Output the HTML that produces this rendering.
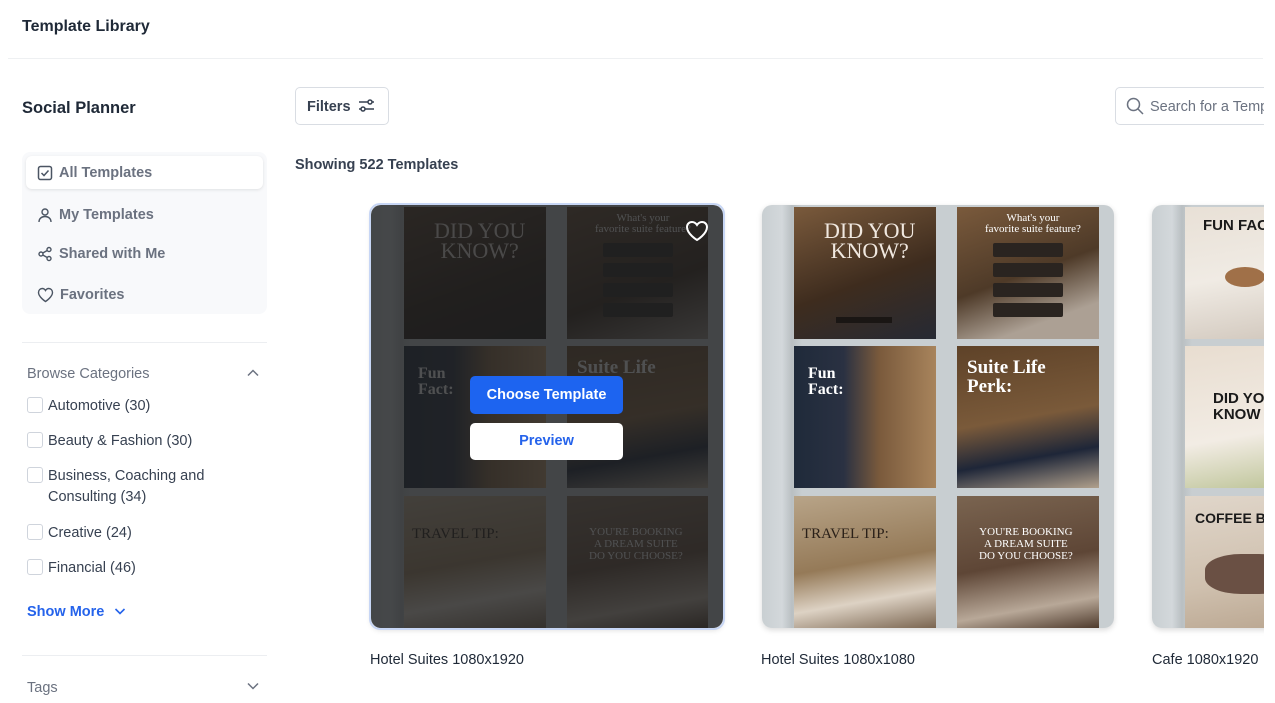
<!DOCTYPE html>
<html><head><meta charset="utf-8"><style>
*{box-sizing:border-box;margin:0;padding:0}
body{width:1275px;height:703px;overflow:hidden;background:#fff;font-family:"Liberation Sans",sans-serif;color:#1f2937;position:relative}
.a{position:absolute}
.t{font-size:16px;font-weight:bold;color:#1f2937}
.nav{position:absolute;left:22px;top:152px;width:245px;height:162px;background:#f8f9fb;border-radius:8px}
.ni{position:absolute;left:15px;font-size:14.5px;font-weight:bold;color:#6b7280;display:flex;align-items:center;gap:6px}
.cb{width:16px;height:16px;border:1.5px solid #cfd4dc;border-radius:3px;position:absolute;left:27px}
.cl{position:absolute;left:48px;font-size:14.5px;color:#374151;line-height:21px}
.card{position:absolute;top:205px;width:352px;height:423px;border-radius:10px;background:linear-gradient(90deg,#c9cfd2 0,#d3d8db 20px,#b9bfc2 30px,#c8ced1 40px);overflow:hidden;box-shadow:0 2px 6px rgba(0,0,0,.15)}
.tile{position:absolute;overflow:hidden;font-family:"Liberation Serif",serif;color:#fff}
.c1{left:33px;width:142px}.c2{left:196px;width:141px}
.r1{top:2px;height:132px}.r2{top:141px;height:142px}.r3{top:291px;height:132px}
.lbl{position:absolute;top:652px;font-size:14.5px;color:#1f2937}
.btn{position:absolute;border-radius:5px;font-size:14.5px;font-weight:bold;text-align:center}
</style></head><body>
<div class="a t" style="left:22px;top:18px;font-size:16px">Template Library</div>
<div class="a" style="left:8px;top:58px;width:1255px;height:1px;background:#eef0f2"></div>

<div class="a t" style="left:22px;top:99px;font-size:16.5px">Social Planner</div>
<div class="nav">
  <div class="a" style="left:4px;top:4px;width:237px;height:33px;background:#fff;border-radius:6px;box-shadow:0 1px 3px rgba(0,0,0,.1)"></div>
  <div class="ni" style="top:13px"><svg width="16" height="16" viewBox="0 0 16 16"><rect x="1.5" y="1.5" width="13" height="13" rx="2" fill="none" stroke="#4b5563" stroke-width="1.5"/><path d="M4.5 8l2.5 2.5 4.5-5" fill="none" stroke="#4b5563" stroke-width="1.5"/></svg>All Templates</div>
  <div class="ni" style="top:55px"><svg width="16" height="16" viewBox="0 0 16 16" fill="none" stroke="#4b5563" stroke-width="1.4"><circle cx="8" cy="5" r="3"/><path d="M2 15c0-3.5 2.7-5.5 6-5.5s6 2 6 5.5"/></svg>My Templates</div>
  <div class="ni" style="top:94px"><svg width="16" height="16" viewBox="0 0 16 16" fill="none" stroke="#4b5563" stroke-width="1.4"><circle cx="12" cy="3.5" r="2"/><circle cx="4" cy="8" r="2"/><circle cx="12" cy="12.5" r="2"/><path d="M5.8 7l4.4-2.5M5.8 9l4.4 2.5"/></svg>Shared with Me</div>
  <div class="ni" style="top:135px"><svg width="17" height="16" viewBox="0 0 17 16" fill="none" stroke="#4b5563" stroke-width="1.4"><path d="M8.5 14.5S1.5 10 1.5 5.5C1.5 3 3.3 1.5 5.2 1.5c1.5 0 2.6.8 3.3 2 .7-1.2 1.8-2 3.3-2 1.9 0 3.7 1.5 3.7 4 0 4.5-7 9-7 9z"/></svg>Favorites</div>
</div>
<div class="a" style="left:22px;top:342px;width:245px;height:1px;background:#eceef1"></div>
<div class="a" style="left:27px;top:366px;font-size:14.5px;color:#6b7280">Browse Categories</div>
<svg class="a" style="left:246px;top:368px" width="14" height="10" viewBox="0 0 14 10"><path d="M2 7.5l5-5 5 5" fill="none" stroke="#6b7280" stroke-width="1.5"/></svg>
<div class="cb" style="top:397px"></div><div class="cl" style="top:396px">Automotive (30)</div>
<div class="cb" style="top:432px"></div><div class="cl" style="top:431px">Beauty &amp; Fashion (30)</div>
<div class="cb" style="top:467px"></div><div class="cl" style="top:466px">Business, Coaching and<br>Consulting (34)</div>
<div class="cb" style="top:524px"></div><div class="cl" style="top:523px">Creative (24)</div>
<div class="cb" style="top:559px"></div><div class="cl" style="top:558px">Financial (46)</div>
<div class="a" style="left:27px;top:604px;font-size:14.5px;font-weight:bold;color:#2563eb">Show More</div>
<svg class="a" style="left:113px;top:606px" width="14" height="10" viewBox="0 0 14 10"><path d="M2.5 3l4.5 4.5L11.5 3" fill="none" stroke="#2563eb" stroke-width="1.6"/></svg>
<div class="a" style="left:22px;top:655px;width:245px;height:1px;background:#eceef1"></div>
<div class="a" style="left:27px;top:680px;font-size:14.5px;color:#6b7280">Tags</div>
<svg class="a" style="left:246px;top:681px" width="14" height="10" viewBox="0 0 14 10"><path d="M2 2.5l5 5 5-5" fill="none" stroke="#6b7280" stroke-width="1.5"/></svg>

<div class="a" style="left:295px;top:87px;width:94px;height:38px;border:1px solid #d9dde3;border-radius:5px"></div>
<div class="a" style="left:307px;top:99px;font-size:14.5px;font-weight:bold;color:#374151">Filters</div>
<svg class="a" style="left:358px;top:98px" width="17" height="15" viewBox="0 0 17 15" fill="none" stroke="#374151" stroke-width="1.5"><path d="M1 4h9M14 4h2M1 11h2M7 11h9"/><circle cx="12" cy="4" r="2"/><circle cx="5" cy="11" r="2"/></svg>
<div class="a" style="left:1115px;top:87px;width:170px;height:38px;border:1px solid #d9dde3;border-radius:5px"></div>
<svg class="a" style="left:1126px;top:97px" width="18" height="18" viewBox="0 0 18 18" fill="none" stroke="#6b7280" stroke-width="1.5"><circle cx="7.5" cy="7.5" r="6"/><path d="M12 12l5 5"/></svg>
<div class="a" style="left:1150px;top:99px;font-size:14.5px;color:#6b7280;white-space:nowrap">Search for a Template</div>
<div class="a" style="left:295px;top:157px;font-size:14.5px;font-weight:bold;color:#374151">Showing 522 Templates</div>

<!-- Card 1 -->
<div class="card" style="left:371px">
  <div class="tile c1 r1" style="background:linear-gradient(160deg,#5a4330,#2e2118 60%,#1f1a18)"><div class="a" style="left:30px;top:14px;font-size:22px;line-height:20px;color:#e8e0d8;text-align:center">DID YOU<br>KNOW?</div></div>
  <div class="tile c2 r1" style="background:linear-gradient(160deg,#6b5038,#3a2a1e 60%,#9a9088)"><div class="a" style="left:28px;top:6px;font-size:11px;text-align:center;line-height:11px">What's your<br>favorite suite feature?</div><div class="a" style="left:36px;top:36px;width:70px;height:14px;background:#2a2420;border-radius:2px"></div><div class="a" style="left:36px;top:56px;width:70px;height:14px;background:#2a2420;border-radius:2px"></div><div class="a" style="left:36px;top:76px;width:70px;height:14px;background:#2a2420;border-radius:2px"></div><div class="a" style="left:36px;top:96px;width:70px;height:14px;background:#2a2420;border-radius:2px"></div></div>
  <div class="tile c1 r2" style="background:linear-gradient(90deg,#1f2a3a 0,#2a3142 35%,#8a6a48 60%,#c09a70)"><div class="a" style="left:14px;top:20px;font-size:16px;font-weight:bold;line-height:16px">Fun<br>Fact:</div></div>
  <div class="tile c2 r2" style="background:linear-gradient(170deg,#6a4c30,#8a6844 50%,#1e2638 75%,#c0b09c)"><div class="a" style="left:10px;top:12px;font-size:19px;font-weight:bold;line-height:19px">Suite Life<br>Perk:</div></div>
  <div class="tile c1 r3" style="background:linear-gradient(170deg,#c7b49a,#a58a68 50%,#e6dcd0 75%,#8a7560)"><div class="a" style="left:8px;top:30px;font-size:15px;color:#2a2018">TRAVEL TIP:</div></div>
  <div class="tile c2 r3" style="background:linear-gradient(170deg,#8a7460,#6b5240 50%,#c7b8a8 80%,#5a4434)"><div class="a" style="left:22px;top:30px;font-size:11px;text-align:center;line-height:12px">YOU'RE BOOKING<br>A DREAM SUITE<br>DO YOU CHOOSE?</div></div>
  <div class="a" style="left:0;top:0;width:352px;height:423px;background:rgba(30,31,32,.78)"></div>
  <svg class="a" style="left:314px;top:15px" width="24" height="22" viewBox="0 0 24 22" fill="none" stroke="#fff" stroke-width="2"><path d="M12 20S2 14 2 7c0-3 2.3-5 5-5 2 0 3.8 1.2 5 3 1.2-1.8 3-3 5-3 2.7 0 5 2 5 5 0 7-10 13-10 13z"/></svg>
  <div class="btn" style="left:99px;top:171px;width:153px;height:38px;line-height:38px;background:#1d64f0;color:#fff">Choose Template</div>
  <div class="btn" style="left:99px;top:218px;width:153px;height:37px;line-height:37px;background:#fff;color:#2563eb">Preview</div>
</div>
<div class="a" style="left:369px;top:203px;width:356px;height:427px;border:2px solid #c7d6f5;border-radius:11px"></div>
<div class="lbl" style="left:370px">Hotel Suites 1080x1920</div>

<!-- Card 2 -->
<div class="card" style="left:762px">
  <div class="tile" style="left:32px;width:142px;top:2px;height:132px;background:linear-gradient(160deg,#7a5a3c,#3e2c1e 55%,#262a34)"><div class="a" style="left:30px;top:14px;font-size:22px;line-height:20px;color:#f0e8e0;text-align:center">DID YOU<br>KNOW?</div><div class="a" style="left:42px;top:110px;width:56px;height:6px;background:#1a1614"></div></div>
  <div class="tile" style="left:195px;width:142px;top:2px;height:132px;background:linear-gradient(160deg,#7a5a3c,#4e3a28 50%,#aca094 80%)"><div class="a" style="left:28px;top:6px;font-size:11px;text-align:center;line-height:11px">What's your<br>favorite suite feature?</div><div class="a" style="left:36px;top:36px;width:70px;height:14px;background:#2a2420;border-radius:2px"></div><div class="a" style="left:36px;top:56px;width:70px;height:14px;background:#2a2420;border-radius:2px"></div><div class="a" style="left:36px;top:76px;width:70px;height:14px;background:#2a2420;border-radius:2px"></div><div class="a" style="left:36px;top:96px;width:70px;height:14px;background:#2a2420;border-radius:2px"></div></div>
  <div class="tile" style="left:32px;width:142px;top:141px;height:142px;background:linear-gradient(90deg,#1f2a3a 0,#2a3142 35%,#7a5a3c 60%,#a8845c)"><div class="a" style="left:14px;top:20px;font-size:16px;font-weight:bold;line-height:16px">Fun<br>Fact:</div></div>
  <div class="tile" style="left:195px;width:142px;top:141px;height:142px;background:linear-gradient(170deg,#5e4228,#7a5a3a 50%,#1e2638 75%,#b0a08c)"><div class="a" style="left:10px;top:12px;font-size:19px;font-weight:bold;line-height:19px">Suite Life<br>Perk:</div></div>
  <div class="tile" style="left:32px;width:142px;top:291px;height:132px;background:linear-gradient(170deg,#b8a488,#957a58 50%,#ddd2c4 75%,#7a6550)"><div class="a" style="left:8px;top:30px;font-size:15px;color:#2a2018">TRAVEL TIP:</div></div>
  <div class="tile" style="left:195px;width:142px;top:291px;height:132px;background:linear-gradient(170deg,#7a6450,#5e4636 50%,#b8a898 80%,#4e3a2c)"><div class="a" style="left:22px;top:30px;font-size:11px;text-align:center;line-height:12px">YOU'RE BOOKING<br>A DREAM SUITE<br>DO YOU CHOOSE?</div></div>
</div>
<div class="lbl" style="left:761px">Hotel Suites 1080x1080</div>

<!-- Card 3 -->
<div class="card" style="left:1152px">
  <div class="tile" style="left:33px;width:142px;top:2px;height:132px;background:linear-gradient(170deg,#e8e0d6,#f0ebe4 50%,#cfc5ba)"><div class="a" style="left:18px;top:10px;font-size:15px;font-weight:bold;color:#1a1a1a;font-family:'Liberation Sans',sans-serif">FUN FACT</div><div class="a" style="left:40px;top:60px;width:40px;height:20px;border-radius:50%;background:#a07048"></div></div>
  <div class="tile" style="left:33px;width:142px;top:141px;height:142px;background:linear-gradient(170deg,#e8ddd0,#f2ece4 60%,#b8c090)"><div class="a" style="left:28px;top:45px;font-size:15px;font-weight:bold;color:#1a1a1a;line-height:16px;font-family:'Liberation Sans',sans-serif">DID YOU<br>KNOW</div></div>
  <div class="tile" style="left:33px;width:142px;top:291px;height:132px;background:linear-gradient(170deg,#e0d6ca,#cfc0ae 60%,#b8a48e)"><div class="a" style="left:10px;top:14px;font-size:14px;font-weight:bold;color:#1a1a1a;font-family:'Liberation Sans',sans-serif">COFFEE BELT</div><div class="a" style="left:20px;top:58px;width:90px;height:40px;border-radius:40%;background:#6a5044"></div></div>
</div>
<div class="lbl" style="left:1152px">Cafe 1080x1920</div>
<div class="a" style="left:1264px;top:0;width:11px;height:703px;background:#fff"></div>
</body></html>
